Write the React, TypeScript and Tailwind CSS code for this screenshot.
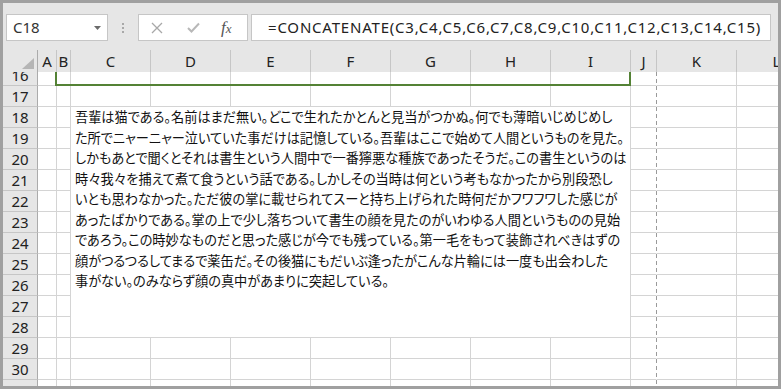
import React from "react";

const COLS = ["A", "B", "C", "D", "E", "F", "G", "H", "I", "J", "K", "L"];
const ROWS = [16, 17, 18, 19, 20, 21, 22, 23, 24, 25, 26, 27, 28, 29, 30, 31];

const LINES = [
  "吾輩は猫である。名前はまだ無い。どこで生れたかとんと見当がつかぬ。何でも薄暗いじめじめし",
  "た所でニャーニャー泣いていた事だけは記憶している。吾輩はここで始めて人間というものを見た。",
  "しかもあとで聞くとそれは書生という人間中で一番獰悪な種族であったそうだ。この書生というのは",
  "時々我々を捕えて煮て食うという話である。しかしその当時は何という考もなかったから別段恐し",
  "いとも思わなかった。ただ彼の掌に載せられてスーと持ち上げられた時何だかフワフワした感じが",
  "あったばかりである。掌の上で少し落ちついて書生の顔を見たのがいわゆる人間というものの見始",
  "であろう。この時妙なものだと思った感じが今でも残っている。第一毛をもって装飾されべきはずの",
  "顔がつるつるしてまるで薬缶だ。その後猫にもだいぶ逢ったがこんな片輪には一度も出会わした",
  "事がない。のみならず顔の真中があまりに突起している。",
];

const GRID =
  "grid grid-cols-[35px_19px_14px_80px_80px_80px_80px_80px_80px_80px_26px_80px_80px] w-max";

function RowHeader({ n, first }: { n: number; first?: boolean }) {
  return (
    <div className="bg-[#e6e6e6] border-r border-b border-r-[#ababab] border-b-[#c6c6c6] overflow-hidden">
      <div
        className={
          first
            ? "h-[20px] mt-[-7px] flex items-center justify-center text-[15px] text-[#222]"
            : "h-[20px] flex items-center justify-center text-[15px] text-[#222]"
        }
      >
        {n}
      </div>
    </div>
  );
}

function Cell({ col }: { col: string }) {
  if (col === "J") {
    return <div className="bg-white border-r border-b border-b-[#d4d4d4] border-r-transparent" />;
  }
  return <div className="bg-white border-r border-b border-[#d4d4d4]" />;
}

export default function App() {
  const body: React.ReactNode[] = [];
  ROWS.forEach((r, i) => {
    body.push(<RowHeader key={"h" + r} n={r} first={i === 0} />);
    COLS.forEach((c) => {
      const inMerge = r >= 18 && r <= 28 && ["C", "D", "E", "F", "G", "H", "I"].includes(c);
      if (inMerge) {
        if (r === 18 && c === "C") {
          body.push(
            <div
              key="merged"
              className="col-span-7 row-span-11 bg-white border-r border-b border-[#d4d4d4] pl-[4px] text-[13.2px] leading-[20.5px] text-[#111] font-['Noto_Sans_CJK_JP',sans-serif] [font-feature-settings:'palt'] overflow-hidden"
            >
              {LINES.map((l, k) => (
                <div key={k} className="whitespace-nowrap">
                  {l}
                </div>
              ))}
            </div>
          );
        }
        return;
      }
      body.push(<Cell key={c + r} col={c} />);
    });
  });

  return (
    <div className="w-[781px] h-[389px] bg-[#a0a0a0] p-[3px] font-['Noto_Sans',sans-serif]">
      <div className="w-[775px] h-[383px] bg-[#e6e6e6] flex flex-col overflow-hidden">
        {/* toolbar */}
        <div className="h-[47px] shrink-0 flex items-start pt-[11px] pl-[3px]">
          <div className="w-[102px] h-[27px] bg-white border border-[#c6c6c6] flex items-center justify-between pl-[6px] pr-[6px]">
            <span className="text-[15px] text-[#333]">C18</span>
            <svg width="7" height="4" viewBox="0 0 7 4">
              <polygon points="0,0 7,0 3.5,4" fill="#6b6b6b" />
            </svg>
          </div>
          <div className="w-[30px] h-[27px] flex flex-col items-center justify-center gap-[2px]">
            <div className="w-[2px] h-[2px] bg-[#a8a8a8]" />
            <div className="w-[2px] h-[2px] bg-[#a8a8a8]" />
            <div className="w-[2px] h-[2px] bg-[#a8a8a8]" />
          </div>
          <div className="w-[110px] h-[27px] bg-white border border-[#c6c6c6] flex items-center pl-[12px]">
            <svg width="12" height="12" viewBox="0 0 12 12">
              <path d="M1 1 L11 11 M11 1 L1 11" stroke="#a8a8a8" strokeWidth="1.3" fill="none" />
            </svg>
            <svg width="13" height="11" viewBox="0 0 13 11" className="ml-[24px]">
              <path d="M1 6 L4.5 9.5 L12 1.5" stroke="#b8b8b8" strokeWidth="2" fill="none" />
            </svg>
            <span className="ml-[21px] italic font-['Liberation_Serif',serif] text-[17px] text-[#555] leading-none">
              f<span className="text-[13px]">x</span>
            </span>
          </div>
          <div className="ml-[3px] w-[520px] h-[27px] bg-white border border-[#c6c6c6] flex items-center pl-[16px]">
            <span className="text-[15px] tracking-[0.8px] text-[#222] whitespace-nowrap">
              =CONCATENATE(C3,C4,C5,C6,C7,C8,C9,C10,C11,C12,C13,C14,C15)
            </span>
          </div>
        </div>

        {/* column headers */}
        <div className="h-[22px] shrink-0 overflow-hidden">
          <div className={GRID + " h-[22px]"}>
            <div className="bg-[#e6e6e6] border-r border-b border-r-[#ababab] border-b-[#ababab] flex items-end justify-end pr-[3px] pb-[4px]">
              <svg width="12" height="11" viewBox="0 0 12 11">
                <polygon points="12,0 12,11 0,11" fill="#b5b5b5" />
              </svg>
            </div>
            {COLS.map((c) => (
              <div
                key={c}
                className="bg-[#e6e6e6] border-r border-b border-r-[#c6c6c6] border-b-[#ababab] flex items-center justify-center text-[15px] text-[#222]"
              >
                {c}
              </div>
            ))}
          </div>
        </div>

        {/* body */}
        <div className="relative flex-1 overflow-hidden">
          <div className={GRID + " grid-rows-[14px_repeat(14,21px)_21px]"}>{body}</div>
          {/* selection border */}
          <div className="absolute left-[52px] top-0 w-[576px] h-[14px] border-l-2 border-r-2 border-b-2 border-[#548235]" />
          {/* page break */}
          <svg className="absolute left-[653px] top-0" width="1" height="320">
            <line x1="0.5" y1="0" x2="0.5" y2="320" stroke="#9a9a9a" strokeWidth="1" strokeDasharray="4 3" />
          </svg>
        </div>
      </div>
    </div>
  );
}
